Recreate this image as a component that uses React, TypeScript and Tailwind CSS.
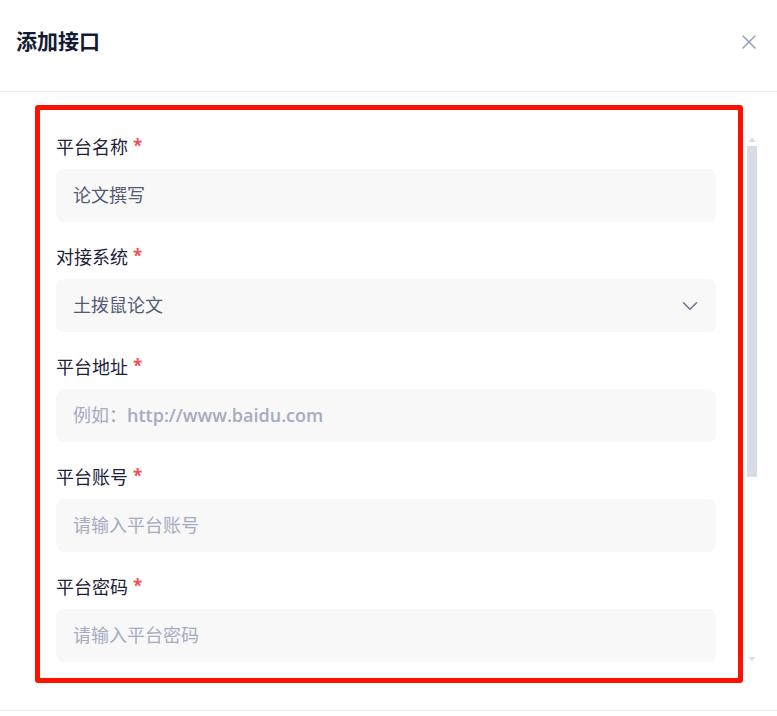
import { ChevronDown, X } from "lucide-react";

const fields = [
  { label: "平台名称", value: "论文撰写", placeholder: "" },
  { label: "对接系统", value: "土拨鼠论文", placeholder: "", select: true },
  { label: "平台地址", value: "", placeholder: "例如：", hint: "http://www.baidu.com" },
  { label: "平台账号", value: "", placeholder: "请输入平台账号" },
  { label: "平台密码", value: "", placeholder: "请输入平台密码" },
];

export default function App() {
  return (
    <div
      className="w-[777px] h-[716px] bg-white overflow-hidden"
      style={{ fontFamily: '"Open Sans", "Noto Sans CJK SC", sans-serif' }}
    >
      {/* Header */}
      <div className="h-[92px] flex items-center justify-between pl-4 pr-4 border-b border-[#ebedf0]">
        <h2 className="text-[21px] font-bold text-[#141a33] -mt-2">添加接口</h2>
        <X size={24} strokeWidth={1.6} className="text-[#9ba1b8] -mt-2" />
      </div>

      {/* Body */}
      <div className="h-[619px] flex pt-[13px] pl-[35px] border-b border-[#ebedf0]">
        <div className="w-[708px] h-[578px] border-[5px] border-[#ff1100] rounded-[3px] pl-4 pr-[22px] pt-[25px] overflow-hidden">
          <div className="flex flex-col gap-[23px]">
            {fields.map((f) => (
              <div key={f.label}>
                <div className="h-6 flex items-center text-[18px] text-[#1d2137] mb-[10px]">
                  {f.label}
                  <span className="text-[#f0505a] text-[17px] font-bold ml-[5px] -mt-[3px]">*</span>
                </div>
                <div className="h-[53px] rounded-lg bg-[#f8f8f9] flex items-center justify-between pl-[17px] pr-[13px] text-[18px]">
                  {f.value ? (
                    <span className="text-[#535a74]">{f.value}</span>
                  ) : (
                    <span className="text-[#a5abc0]">
                      {f.placeholder}
                      {f.hint && <span className="font-semibold">{f.hint}</span>}
                    </span>
                  )}
                  {f.select && (
                    <ChevronDown size={26} strokeWidth={1.4} className="text-[#6b7390]" />
                  )}
                </div>
              </div>
            ))}
          </div>
        </div>

        {/* Scrollbar */}
        <div className="w-[10px] ml-1 mt-[33px] flex flex-col items-center">
          <div className="w-0 h-0 border-x-[4px] border-x-transparent border-b-[4px] border-b-[#d9dce8]" />
          <div className="w-[10px] h-[331px] mt-[4px] bg-[#d9dce8]" />
          <div className="mt-[180px] w-0 h-0 border-x-[4px] border-x-transparent border-t-[4px] border-t-[#d9dce8]" />
        </div>
      </div>
    </div>
  );
}
